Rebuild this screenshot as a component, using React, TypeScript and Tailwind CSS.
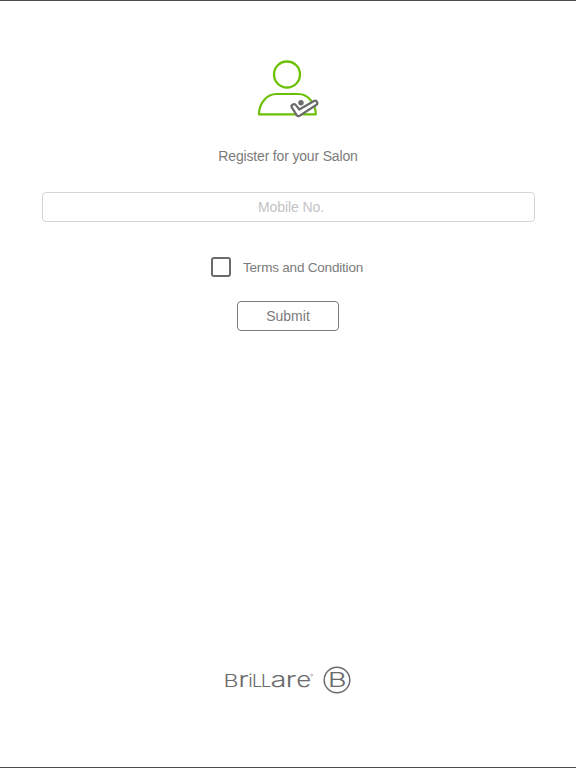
import React, { useState } from 'react';

const wordmark = [
  { char: 'B', x: 223.4, size: 17.5, width: 15 },
  { char: 'r', x: 238.3, size: 21.5, width: 10.5 },
  { char: 'i', x: 248.2, size: 17, width: 4.5 },
  { char: 'L', x: 252, size: 17.5, width: 10.3 },
  { char: 'L', x: 261, size: 17.5, width: 10.3 },
  { char: 'a', x: 270.6, size: 21.5, width: 16 },
  { char: 'r', x: 285.4, size: 21.5, width: 11 },
  { char: 'e', x: 296.2, size: 21.5, width: 15 },
];

const UserIcon = () => (
  <svg width="64" height="60" viewBox="256 59 64 60" fill="none">
    <circle cx="287" cy="74.5" r="13" stroke="#6cc004" strokeWidth="2.3" />
    <path
      d="M259 114.3H315.8C315.8 103 307.5 94 298.5 94H276.5C267 94 259 103 259 114.3Z"
      stroke="#6cc004"
      strokeWidth="2.2"
      strokeLinejoin="round"
    />
    <path
      d="M296.1 105.4L299.3 109.5L314 101C316.8 99.8 318.6 103.4 316.2 105L299.8 115.7C298.6 116.4 297.4 116.2 296.7 115.1L291.9 107.7C290.4 104.9 294.2 102.9 296.1 105.4Z"
      fill="white"
      stroke="#6b6b6d"
      strokeWidth="2.2"
      strokeLinejoin="round"
    />
    <circle cx="301" cy="102.8" r="2.7" fill="#6b6b6d" />
  </svg>
);

const BrandLogo = () => (
  <svg
    width="128"
    height="30"
    viewBox="224 665 128 30"
    fill="#6b6b6d"
    fontFamily="Inter, sans-serif"
    overflow="visible"
  >
    {wordmark.map((letter, index) => (
      <text
        key={index}
        x={letter.x}
        y="686.7"
        fontSize={letter.size}
        fontWeight="300"
        textLength={letter.width}
        lengthAdjust="spacingAndGlyphs"
      >
        {letter.char}
      </text>
    ))}
    <circle cx="311.7" cy="675" r="0.9" fill="none" stroke="#8a8a8a" strokeWidth="0.6" />
    <circle cx="337" cy="680" r="12.8" fill="none" stroke="#6b6b6d" strokeWidth="1.5" />
    <text
      x="327.8"
      y="687"
      fontSize="19.5"
      fontWeight="300"
      textLength="19"
      lengthAdjust="spacingAndGlyphs"
    >
      B
    </text>
  </svg>
);

const App: React.FC = () => {
  const [mobile, setMobile] = useState('');
  const [accepted, setAccepted] = useState(false);

  return (
    <div className="flex h-[768px] w-full flex-col items-center border-y border-[#4c4c4c] bg-white font-['Liberation_Sans',sans-serif] text-[#7b7b7b]">
      <div className="mt-[58px] h-[60px]">
        <UserIcon />
      </div>

      <h1 className="mt-[26px] text-[14px] leading-[22px] tracking-[-0.17px]">Register for your Salon</h1>

      <div className="mt-[25px] w-full px-[41.5px]">
        <input
          type="tel"
          value={mobile}
          onChange={(e) => setMobile(e.target.value)}
          placeholder="Mobile No."
          className="block h-[30px] w-full rounded border border-[#d5d5d5] pl-1.5 text-center text-[14px] tracking-[-0.1px] outline-none placeholder:text-[#c3c3c5]"
        />
      </div>

      <label className="mt-[35px] mr-0.5 flex h-5 items-center gap-3">
        <input
          type="checkbox"
          checked={accepted}
          onChange={(e) => setAccepted(e.target.checked)}
          className="h-5 w-5 appearance-none rounded-[3px] border-2 border-[#6b6b6d] checked:bg-[#6cc004]"
        />
        <span className="pt-0.5 text-[13.5px] tracking-[-0.2px]">Terms and Condition</span>
      </label>

      <button className="mt-6 h-[30px] w-[102px] rounded border border-[#7b7b7b] text-[14px]">
        Submit
      </button>

      <div className="mt-auto mb-[72px] h-[30px]">
        <BrandLogo />
      </div>
    </div>
  );
};

export default App;
